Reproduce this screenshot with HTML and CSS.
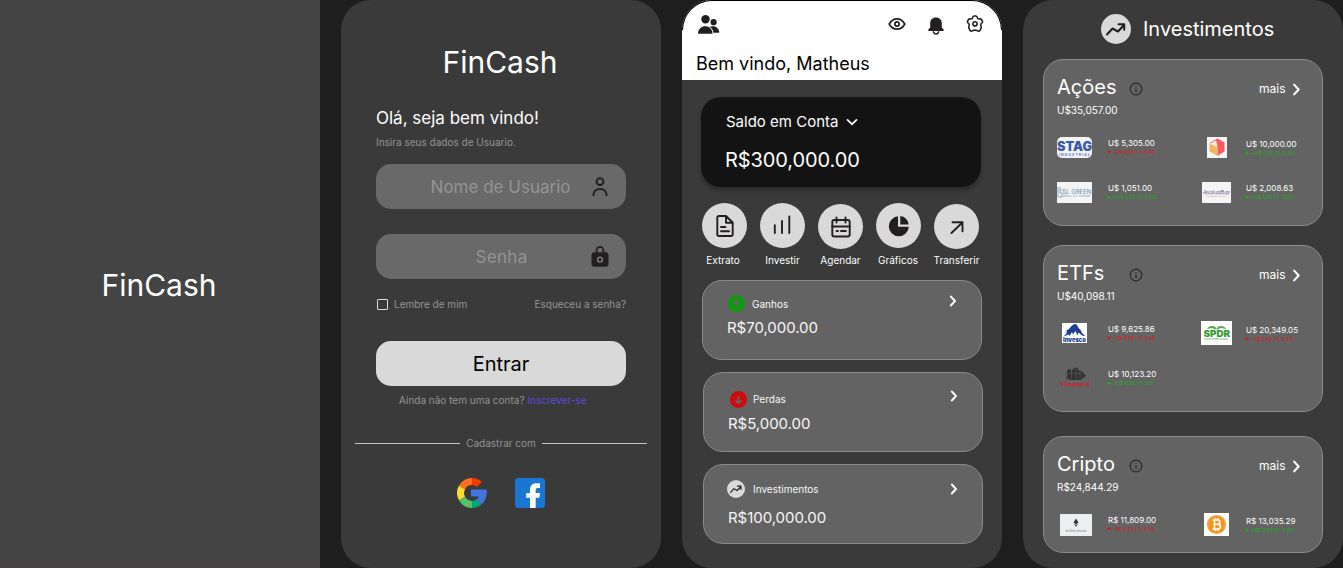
FILE: index.html
```html
<!DOCTYPE html>
<html lang="pt-BR">
<head>
<meta charset="utf-8">
<title>FinCash</title>
<link rel="stylesheet" href="styles.css">
</head>
<body>
<svg class="defs" width="0" height="0" aria-hidden="true">
  <symbol id="trend" viewBox="0 0 30 30"><circle cx="15" cy="15" r="15" fill="#d9d9d9"/><path d="M6 20.5 11.5 14.5 17 17.5 23 11M17.5 10.3H23.2V15.8" fill="none" stroke="#231f20" stroke-width="2" stroke-linecap="round" stroke-linejoin="round"/></symbol>
  <symbol id="info" viewBox="0 0 14 14"><circle cx="7" cy="7" r="5.8" fill="none" stroke="#2b2829" stroke-width="1.2"/><path d="M7 6.2V10M7 4V5" stroke="#2b2829" stroke-width="1.2"/></symbol>
  <symbol id="chev" viewBox="0 0 8 12"><path d="M1.8 1.5 6 6 1.8 10.5" fill="none" stroke="#fff" stroke-width="1.9" stroke-linecap="round" stroke-linejoin="round"/></symbol>
  <symbol id="down" viewBox="0 0 5 4"><path d="M0 1 1 .3H4L5 1 2.5 3.8Z" fill="#e01414"/></symbol>
  <symbol id="up" viewBox="0 0 5 4"><path d="M2.5 0 4.6 2.4V3.5H.4V2.4Z" fill="#14b414"/></symbol>
</svg>
<main class="board">
  <section class="screen splash"><h1 class="brand">FinCash</h1></section>

  <section class="screen login">
    <h1 class="brand">FinCash</h1>
    <h2 class="hello">Olá, seja bem vindo!</h2>
    <p class="hint">Insira seus dados de Usuario.</p>
    <div class="field user"><span>Nome de Usuario</span>
      <svg width="18" height="22" viewBox="0 0 18 22" fill="none" stroke="#231f20" stroke-width="2" stroke-linecap="round"><circle cx="9" cy="5.7" r="3.4"/><path d="M2.4 19.3C2.4 10.8 15.6 10.8 15.6 19.3"/></svg>
    </div>
    <div class="field pass"><span>Senha</span>
      <svg width="18" height="22" viewBox="0 0 18 22"><path d="M5.6 8V4.3a3.4 3.4 0 0 1 6.8 0V8" fill="none" stroke="#231f20" stroke-width="1.8"/><rect x=".5" y="6.3" width="17" height="14.5" rx="3" fill="#231f20"/><circle cx="9" cy="13.6" r="2.4" fill="none" stroke="#777" stroke-width="1.6"/></svg>
    </div>
    <div class="options"><label class="remember"><i class="box"></i>Lembre de mim</label><span>Esqueceu a senha?</span></div>
    <div class="enter">Entrar</div>
    <p class="signup">Ainda não tem uma conta? <a>Inscrever-se</a></p>
    <div class="divider"><i></i><span>Cadastrar com</span><i></i></div>
    <div class="social">
      <svg width="30" height="30" viewBox="0 0 30 30" fill="none" stroke-width="7">
        <path d="M22.4 6.4A11.4 11.4 0 0 0 15 3.6" stroke="#f13c00"/>
        <path d="M15 3.6A11.4 11.4 0 0 0 5 9.5" stroke="#ff6d1f"/>
        <path d="M5 9.5A11.4 11.4 0 0 0 5 20.5" stroke="#ffd92e"/>
        <path d="M5 20.5A11.4 11.4 0 0 0 15 26.4" stroke="#54c06a"/>
        <path d="M15 26.4A11.4 11.4 0 0 0 22.2 23.8" stroke="#00a876"/>
        <path d="M14 11.5H29.7C30.4 17.5 28.7 22.6 24.7 26.3L19.6 22 22 18.5H14Z" fill="#4175df" stroke="none"/>
      </svg>
      <svg width="30" height="30" viewBox="0 0 30 30"><rect width="30" height="30" rx="3.5" fill="#1976d2"/><path d="M15 30V19.8H11.2V15H15V12C15 7.5 17.3 5.2 21.3 5.2H25V10H22.7C21.2 10 20.7 10.7 20.7 12.2V15H25L24.3 19.8H20.7V30Z" fill="#fafafa"/></svg>
    </div>
  </section>

  <section class="screen home">
    <header>
      <div class="cap"></div>
      <div class="bar">
        <svg width="22" height="20" viewBox="0 0 22 20" fill="#231f20"><circle cx="7.5" cy="5.2" r="4.2"/><circle cx="15.6" cy="8.2" r="3.1"/><path d="M0 19.8C0 9.8 14.5 9.8 14.5 19.8ZM11.5 13C15 11.3 21 12.5 21.3 18.7H15.4C15 15.5 13.5 14 11.5 13Z"/></svg>
        <div class="tools">
          <svg width="18" height="14" viewBox="0 0 18 14" fill="none" stroke="#231f20" stroke-width="1.7"><path d="M1.2 7C5 .1 13 .1 16.8 7 13 13.9 5 13.9 1.2 7Z"/><circle cx="9" cy="7" r="2.1"/></svg>
          <svg class="bell" width="16" height="18" viewBox="0 0 16 18" fill="#231f20"><path d="M8 .5C4.4.5 2.2 3 2.2 6.3V10.5L.4 12.4V14H15.6V12.4L13.8 10.5V6.3C13.8 3 11.6.5 8 .5Z"/><path d="M5.4 14.3a2.6 2.6 0 0 0 5.2 0" fill="none" stroke="#231f20" stroke-width="1.5"/></svg>
          <svg width="18" height="18" viewBox="0 0 18 18" fill="none" stroke="#231f20" stroke-width="1.6" stroke-linejoin="round"><path d="M6.3 3.6Q7 1 8 1H10Q11 1 11.7 3.6Q12.2 4.3 14.5 3.9 15.5 4 16.6 6.6 16.9 7.4 15 8.8 14.2 9.7 15.3 12.3 15.3 13.6 13.5 16 12.8 16.6 10.8 15.4 9 14.8 7.2 15.4 5.2 16.6 4.5 16 2.7 13.6 2.7 12.3 3.8 9.7 3 8.8 1.1 7.4 1.4 6.6 2.5 4 3.5 3.9 5.8 4.3 6.3 3.6Z"/><circle cx="9" cy="8.8" r="2.1"/></svg>
        </div>
      </div>
      <p class="welcome">Bem vindo, Matheus</p>
    </header>
    <div class="balance">
      <p class="label">Saldo em Conta <svg width="12" height="8" viewBox="0 0 12 8"><path d="M1.5 1.8 6 6.2 10.5 1.8" fill="none" stroke="#fff" stroke-width="1.7" stroke-linecap="round"/></svg></p>
      <p class="value">R$300,000.00</p>
    </div>
    <nav class="actions">
      <div class="doc"><b><svg viewBox="0 0 22 22"><path d="M3.3 2.8Q3.3 1 5.1 1H12L18.7 7.5V19.2Q18.7 21 16.9 21H5.1Q3.3 21 3.3 19.2ZM12 1.5V7.7H18.5M7 12H11.5M7 16.3H15"/></svg></b><span>Extrato</span></div>
      <div class="bars"><b><svg viewBox="0 0 22 22"><path d="M3.8 11.2V19M11 7V19M18.3 2.5V19"/></svg></b><span>Investir</span></div>
      <div class="low"><b><svg viewBox="0 0 22 22"><rect x="2.3" y="4" width="17.4" height="16.5" rx="2"/><path d="M6.5 1.5V6.5M15.5 1.5V6.5M2.3 10.5H19.7M6.6 15H8M11 15H15.8"/></svg></b><span>Agendar</span></div>
      <div class="pie"><b><svg viewBox="0 0 22 22"><path class="solid" d="M10 1.3V11.7H20.8A10 10 0 1 1 10 1.3ZM12.3 1A9.6 9.6 0 0 1 20.8 9.5H12.3Z"/></svg></b><span>Gráficos</span></div>
      <div class="low"><b><svg viewBox="0 0 22 22"><path d="M5.5 17 16.3 6.5M6.5 6.3H16.5V15.3"/></svg></b><span>Transferir</span></div>
    </nav>
    <div class="summary gains">
      <div class="line"><svg class="dot" viewBox="0 0 17 17"><circle cx="8.5" cy="8.5" r="8.5" fill="#0f9b0f"/><path d="M8.5 12.3V5M5.5 7.7 8.5 4.8 11.5 7.7" fill="none" stroke="#636363" stroke-width="1.7"/></svg><span>Ganhos</span><svg class="go"><use href="#chev"/></svg></div>
      <p>R$70,000.00</p>
    </div>
    <div class="summary losses">
      <div class="line"><svg class="dot" viewBox="0 0 17 17"><circle cx="8.5" cy="8.5" r="8.5" fill="#cf0a0a"/><path d="M8.5 4.7V12M5.5 9.3 8.5 12.2 11.5 9.3" fill="none" stroke="#636363" stroke-width="1.7"/></svg><span>Perdas</span><svg class="go"><use href="#chev"/></svg></div>
      <p>R$5,000.00</p>
    </div>
    <div class="summary invest">
      <div class="line"><svg class="dot"><use href="#trend"/></svg><span>Investimentos</span><svg class="go"><use href="#chev"/></svg></div>
      <p>R$100,000.00</p>
    </div>
  </section>

  <section class="screen portfolio">
    <h1 class="heading"><svg width="30" height="30"><use href="#trend"/></svg>Investimentos</h1>

    <article class="group stocks">
      <div class="top"><h2>Ações</h2><svg class="info"><use href="#info"/></svg><span>mais</span><svg class="more"><use href="#chev"/></svg></div>
      <p class="total">U$35,057.00</p>
      <div class="assets">
        <div class="asset">
          <div class="logo"><svg width="35" height="21" viewBox="0 0 35 21"><rect width="35" height="21" rx="5" fill="#f1f3f5"/><text x="0" y="14" textLength="35" lengthAdjust="spacingAndGlyphs" class="stag">STAG</text><text x="2" y="18.5" textLength="31" class="stag-sub">INDUSTRIAL</text></svg></div>
          <div class="quote"><b>U$ 5,305.00</b><span class="neg"><svg><use href="#down"/></svg>-U$ 0,25 (-%0,14)</span></div>
        </div>
        <div class="asset second">
          <div class="logo"><svg width="20" height="21" viewBox="0 0 20 21"><path fill="#f5f5f5" d="M0 0H20V21H0Z"/><path d="M10.5 1.5 17.5 5.5V14.5L10.5 19V10L5 7 2.5 6Z" fill="#f75c62"/><path d="M2.5 6.5 10.5 10.5V19L2.5 14.5Z" fill="#f2b45c"/><path d="M3.3 6.5 9 3.5 10.5 9.5Z" fill="#fff2e8"/></svg></div>
          <div class="quote"><b>U$ 10,000.00</b><span class="pos"><svg><use href="#up"/></svg>+U$ 0,55 (% 0,33)</span></div>
        </div>
        <div class="asset">
          <div class="logo"><svg width="35" height="21" viewBox="0 0 35 21"><path fill="#f4f4f4" d="M0 0H35V21H0Z"/><path d="M1 5V15H5V11H3V8H5M3 5V8" fill="none" stroke="#7fa0b8" stroke-width=".9"/><text x="5.3" y="12" textLength="29" lengthAdjust="spacingAndGlyphs" class="slg">SL GREEN</text><text x="5.5" y="15.3" textLength="28" lengthAdjust="spacingAndGlyphs" class="slg-sub">REALTY CORP</text></svg></div>
          <div class="quote"><b>U$ 1,051.00</b><span class="pos"><svg><use href="#up"/></svg>+U$ 0,05 (% 0,09)</span></div>
        </div>
        <div class="asset">
          <div class="logo"><svg width="29" height="21" viewBox="0 0 29 21"><path fill="#f4f4f4" d="M0 0H29V21H0Z"/><text x=".7" y="11.7" textLength="27.5" lengthAdjust="spacingAndGlyphs" class="avb">AvalonBay</text><path d="M3 12.3H26" stroke="#d8b98c" stroke-width=".5"/><text x="5" y="14.5" textLength="19" lengthAdjust="spacingAndGlyphs" class="avb-sub">COMMUNITIES</text></svg></div>
          <div class="quote"><b>U$ 2,008.63</b><span class="pos"><svg><use href="#up"/></svg>+U$ 1,85 (% 0,93)</span></div>
        </div>
      </div>
    </article>

    <article class="group etfs">
      <div class="top"><h2>ETFs</h2><svg class="info"><use href="#info"/></svg><span>mais</span><svg class="more"><use href="#chev"/></svg></div>
      <p class="total">U$40,098.11</p>
      <div class="assets">
        <div class="asset">
          <div class="logo"><svg width="25" height="20" viewBox="0 0 25 20"><path fill="#fff" d="M0 0H25V20H0Z"/><path d="M1.5 13.5 4.5 10.5V7.5L7 6 10 2.5 13 .8 15 2 16.5 5 19 7.5 20 10 23.5 13.3 20 12.5 16.5 9.5 15.5 12.5 13.5 8 11 11.5 10 9 7.5 13 6.5 11.5Z" fill="#1e3f94"/><text x="1" y="19" textLength="23" lengthAdjust="spacingAndGlyphs" class="inv">Invesco</text></svg></div>
          <div class="quote"><b>U$ 9,625.86</b><span class="neg"><svg><use href="#down"/></svg>-U$ 0,25 (-%0,14)</span></div>
        </div>
        <div class="asset second">
          <div class="logo"><svg width="31" height="24" viewBox="0 0 31 24"><path fill="#fff" d="M0 0H31V24H0Z"/><path d="M6 8Q8 4 14 5.5L15.5 8 17 5.5Q23 4 25 8L20 7 16 8.5H15L11 7Z" fill="#59a646"/><text x="2.5" y="15.7" textLength="26.5" lengthAdjust="spacingAndGlyphs" class="spdr">SPDR</text><text x="3" y="18.5" textLength="25" class="spdr-sub">STATE STREET GLOBAL</text></svg></div>
          <div class="quote"><b>U$ 20,349.05</b><span class="neg"><svg><use href="#down"/></svg>-U$ 0,63 (% 0,53)</span></div>
        </div>
        <div class="asset">
          <div class="logo"><svg width="30" height="21" viewBox="0 0 30 21"><path d="M7 3 11 2V5L14 .5 18 1V3L22 4 26 9 23 11 21 13H10L8 11.5 6 12 7.5 8Z" fill="#343434"/><path d="M11.5 2V12M16 1V12M20 4V12M9 6.5H21" stroke="#666" stroke-width=".5"/><text x=".5" y="18.7" textLength="29" lengthAdjust="spacingAndGlyphs" class="van">Vanguard</text></svg></div>
          <div class="quote"><b>U$ 10,123.20</b><span class="pos"><svg><use href="#up"/></svg>+U$ 0,95 (% 2,11)</span></div>
        </div>
      </div>
    </article>

    <article class="group crypto">
      <div class="top"><h2>Cripto</h2><svg class="info"><use href="#info"/></svg><span>mais</span><svg class="more"><use href="#chev"/></svg></div>
      <p class="total">R$24,844.29</p>
      <div class="assets">
        <div class="asset">
          <div class="logo"><svg class="ether" width="32" height="22" viewBox="0 0 32 22"><path fill="#ebeff0" d="M0 0H32V22H0Z"/><path d="M16 4.5 18.5 8.5 16 10.2 13.5 8.5ZM13.7 9.5 16 11 18.3 9.5 16 12.7Z" fill="#343434"/><text x="6" y="18" textLength="20" class="eth">ethereum</text></svg></div>
          <div class="quote"><b>R$ 11,809.00</b><span class="neg"><svg><use href="#down"/></svg>-R$ 0,25 (-%0,14)</span></div>
        </div>
        <div class="asset second">
          <div class="logo"><svg width="25" height="23" viewBox="0 0 25 23"><path fill="#fff" d="M0 0H25V23H0Z"/><circle cx="12.5" cy="11.5" r="9.5" fill="#f7931a"/><circle cx="12.5" cy="11.5" r="8.5" fill="none" stroke="#fbb45c" stroke-width=".5"/><path d="M8.5 7H13.5C17 7 16.5 11.3 13.5 11.3H10.5M13.5 11.3C17.5 11.3 17.5 16 13.5 16H8.5M10.5 7V16M11.3 5V7M14 5V7M11.3 16V18M14 16V18" fill="none" stroke="#fff" stroke-width="1.6"/></svg></div>
          <div class="quote"><b>R$ 13,035.29</b><span class="pos"><svg><use href="#up"/></svg>+R$ 0,55 (% 0,33)</span></div>
        </div>
      </div>
    </article>
  </section>
</main>
</body>
</html>
```
FILE: styles.css
```css
* { box-sizing: border-box; margin: 0; padding: 0; }
body { background: #1e1e1e; color: #fff; font-family: Inter, "Liberation Sans", sans-serif; font-weight: 400; overflow: hidden; }
h1, h2, b { font-weight: inherit; }
svg { display: block; flex: none; }
.defs { position: absolute; }
.board { display: flex; gap: 21px; width: 1343px; height: 568px; }
.screen { flex: none; width: 320px; height: 568px; background: #3a3a3a; border-radius: 30px; overflow: hidden; }
.brand { font-size: 30px; line-height: 40px; font-weight: 400; text-align: center; }

.splash { display: flex; justify-content: center; padding: 265px 2px 0 0; background: #444; border-radius: 0; border-bottom: 1px solid #484347; }

.login { display: flex; flex-direction: column; padding: 42px 35px 0; color: #949494; font-size: 10px; line-height: 12px; }
.login .brand { color: #fff; padding-right: 2px; }
.hello { margin-top: 25px; color: #fff; font-size: 17px; line-height: 22px; font-weight: 400; }
.hint { margin-top: 7px; }
.field { display: flex; align-items: center; justify-content: flex-end; height: 45px; padding-right: 18px; border-radius: 15px; background: #696969; color: #949494; font-size: 17px; line-height: 22px; }
.field svg { margin-right: -.5px; }
.user { margin-top: 16px; gap: 20px; }
.pass { margin-top: 25px; gap: 63px; letter-spacing: .3px; }
.options { display: flex; justify-content: space-between; margin-top: 19px; }
.remember { display: flex; align-items: center; gap: 6px; padding-left: 1px; }
.box { width: 11px; height: 11px; border: 1px solid #ddd; border-radius: 1px; }
.enter { margin-top: 31px; height: 45px; border-radius: 15px; background: #d9d9d9; color: #000; font-size: 20px; line-height: 46px; text-align: center; }
.signup { margin: 8px 0 0 23px; white-space: nowrap; }
.signup a { color: #5b4bdb; }
.divider { display: flex; align-items: center; justify-content: space-between; margin: 31px -21px 0; }
.divider i { width: 105px; height: 1px; background: #c4c4c4; }
.social { display: flex; gap: 28px; margin: 29px 0 0 81px; }

.home header { height: 80px; background: #fff linear-gradient(#1e1e1e, #1e1e1e) top / 100% 30px no-repeat; color: #000; }
.cap { height: 30px; border: 1px solid #000; border-bottom: 0; border-radius: 30px 30px 0 0; background: #fff; }
.bar { display: flex; justify-content: space-between; margin: -16px 0 0; height: 20px; padding: 0 18px 0 16px; transform: translateY(0); }
.bar svg { overflow: visible; }
.bell { margin-top: 3px; }
.tools { display: flex; align-items: center; gap: 22px; }
.welcome { margin: 19px 0 0 14px; font-size: 18px; line-height: 22px; }
.balance { width: 280px; height: 90px; margin: 17px 0 0 19px; padding: 16px 25px; border-radius: 20px; background: #131313; box-shadow: 0 4px 4px rgba(0,0,0,.25); }
.label { display: flex; align-items: center; gap: 8px; font-size: 15px; line-height: 18px; }
.value { margin: 17px 0 0 -1px; font-size: 20px; line-height: 24px; letter-spacing: -.1px; }
.actions { display: flex; gap: 13px; margin: 16px 0 0 20px; height: 77px; }
.actions div { width: 45px; display: flex; flex-direction: column; align-items: center; gap: 6px; }
.actions .low { padding-top: 1px; gap: 5px; }
.actions b { display: grid; place-items: center; width: 45px; height: 45px; border-radius: 50%; background: #d9d9d9; }
.actions svg { width: 22px; height: 22px; fill: none; stroke: #231f20; stroke-width: 1.9; stroke-linecap: round; stroke-linejoin: round; }
.actions .solid { fill: #231f20; stroke: none; }
.actions span { font-size: 10px; line-height: 12px; white-space: nowrap; }
.doc span { margin-right: 3px; }
.pie span { margin-right: 1px; }
.bars svg { margin: -2px 0 0 -1px; }
.summary { width: 280px; height: 80px; margin: 12px 0 0 21px; padding-left: 24px; border: 1px solid #8b8b8b; border-radius: 20px; background: #636363; color: #f7f7f7; }
.summary .line { display: flex; align-items: center; gap: 7px; height: 18px; font-size: 10px; }
.summary p { font-size: 15px; line-height: 18px; letter-spacing: -.05px; }
.dot { width: 17px; height: 17px; }
.go { width: 8px; height: 12px; margin-left: auto; }
.gains { margin: 0 0 0 20px; padding-top: 13px; }
.gains .line { padding: 1px 24px 0 1px; }
.gains .go { margin-top: -5px; }
.gains p { margin-top: 7px; }
.losses { padding-top: 17px; }
.losses .line { padding: 0 24px 0 2px; gap: 6px; }
.losses .go { margin-top: -6px; }
.losses p { margin-top: 7px; }
.invest { padding-top: 15px; }
.invest .line { padding-right: 24px; gap: 8px; }
.invest .dot { width: 18px; height: 18px; margin-left: -1px; }
.invest p { margin-top: 11px; }

.portfolio { padding: 14px 20px 0; }
.heading { display: flex; align-items: center; gap: 12px; height: 30px; padding-left: 58px; font-size: 20px; white-space: nowrap; }
.group { height: 167px; padding: 15px 13px 0; border: 1px solid #8b8b8b; border-radius: 20px; background: #636363; }
.stocks { margin-top: 15px; }
.etfs { margin-top: 19px; }
.crypto { margin-top: 24px; height: 117px; }
.top { display: grid; grid-template-columns: 71px 131px 33px 10px; align-items: center; height: 25px; }
.top h2 { font-size: 20px; line-height: 25px; }
.top span { font-size: 12px; line-height: 15px; padding-top: 2px; }
.info { width: 14px; height: 14px; margin: 3px 0 0 .5px; }
.more { width: 9px; height: 13px; margin-top: 3px; }
.total { margin-top: 4px; font-size: 10px; line-height: 12px; }
.assets { display: grid; grid-template-columns: 142px 110px; grid-auto-rows: 45px; margin-top: 21px; }
.etfs .assets { margin-top: 20px; }
.asset { display: flex; align-items: flex-start; gap: 16px; height: 21px; }
.asset:nth-child(even) { gap: 12px; }
.logo { display: flex; justify-content: center; align-items: center; width: 35px; height: 21px; flex: none; }
.logo svg { overflow: visible; }
.ether { margin-left: 2px; }
.quote { display: flex; flex-direction: column; padding-top: 1px; font-size: 8px; line-height: 10px; white-space: nowrap; }
.etfs .quote { padding-top: 2px; }
.quote span { display: flex; align-items: center; gap: 2px; margin-left: -1px; font-size: 5px; line-height: 8px; }
.quote svg { width: 4px; height: 4px; }
.second .quote { padding-top: 2px; }
.etfs .second .quote { padding-top: 3px; }
.neg { color: #e01414; }
.pos { color: #14b414; }
.stag { font: 900 13px Inter, sans-serif; fill: #3c57a8; }
.stag-sub { font: 700 3.5px Inter, sans-serif; fill: #6478b4; }
.slg { font: 500 6px Inter, sans-serif; fill: #7395b4; }
.slg-sub { font: 2.5px Inter, sans-serif; fill: #7c95a8; }
.avb { font: 6px "Liberation Serif", serif; fill: #62518f; }
.avb-sub { font: 2px "Liberation Serif", serif; fill: #888; }
.inv { font: 900 5.5px Inter, sans-serif; fill: #1e3f94; }
.spdr { font: 900 9px Inter, sans-serif; fill: #369b38; }
.spdr-sub { font: 2.5px Inter, sans-serif; fill: #4aa84c; }
.van { font: 700 7px "Liberation Serif", serif; fill: #df1630; }
.eth { font: 3.5px Inter, sans-serif; fill: #666; }
```
